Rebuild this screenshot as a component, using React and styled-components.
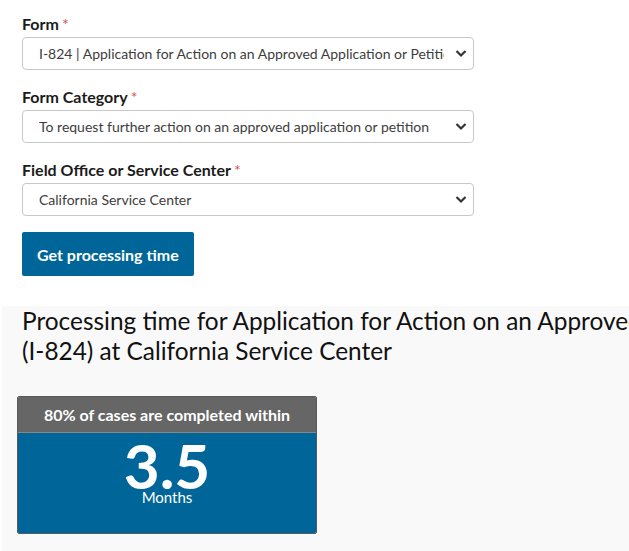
import React from 'react';
import styled, { createGlobalStyle } from 'styled-components';

const GlobalStyle = createGlobalStyle`
  html, body {
    margin: 0;
    padding: 0;
    background: #fff;
    overflow: hidden;
  }
  body {
    font-family: Lato, "Open Sans", Arial, sans-serif;
    color: #1b1b1b;
  }
`;

const Page = styled.div`
  width: 629px;
  height: 551px;
  overflow: hidden;
  display: flex;
  flex-direction: column;
`;

const FormArea = styled.form`
  padding: 15px 0 0 22px;
  display: flex;
  flex-direction: column;
`;

const Field = styled.div`
  display: flex;
  flex-direction: column;
  margin-bottom: 18px;
`;

const Label = styled.label`
  font-size: 16px;
  font-weight: 700;
  line-height: 18px;
  margin-bottom: 4px;
  color: #1b1b1b;

  span {
    color: #d9534f;
    font-weight: 400;
    margin-left: 3px;
  }
`;

const SelectWrap = styled.div`
  position: relative;
  width: 452px;
`;

const Select = styled.select`
  appearance: none;
  width: 100%;
  height: 33px;
  border: 1px solid #c8c8c8;
  border-radius: 4px;
  background: #fff;
  padding: 0 29px 0 16px;
  font-family: Lato, "Open Sans", Arial, sans-serif;
  font-size: 14px;
  color: #3d3d3d;
  outline: none;
`;

const Chevron = styled.svg`
  position: absolute;
  right: 7px;
  top: 12px;
  pointer-events: none;
`;

const Button = styled.button`
  align-self: flex-start;
  margin-top: -2px;
  height: 44px;
  padding: 0 15px;
  border: 0;
  border-radius: 2px;
  background: #006699;
  color: #fff;
  font-family: Lato, "Open Sans", Arial, sans-serif;
  font-size: 16px;
  font-weight: 700;
  cursor: pointer;
`;

const Results = styled.section`
  flex: 1;
  margin: 30px 0 0 2px;
  background: #f9f9f9;
  padding: 0 0 0 20px;
`;

const Heading = styled.h2`
  margin: 0;
  font-size: 24.4px;
  font-weight: 400;
  line-height: 30px;
  color: #111;
  white-space: nowrap;
`;

const Card = styled.div`
  width: 298px;
  margin: 30px 0 0 -5px;
  border: 1px solid #5a5a5a;
  border-radius: 2px;
  overflow: hidden;
`;

const CardHead = styled.div`
  height: 35px;
  background: #666666;
  color: #fff;
  font-size: 16px;
  font-weight: 700;
  display: flex;
  align-items: center;
  justify-content: center;
  border-bottom: 1px solid #888;
`;

const CardBody = styled.div`
  height: 100px;
  background: #006699;
  color: #fff;
  display: flex;
  flex-direction: column;
  align-items: center;
`;

const Big = styled.div`
  font-size: 62px;
  font-weight: 700;
  line-height: 50px;
  margin-top: 7px;
`;

const Unit = styled.div`
  font-size: 15px;
  line-height: 14px;
  margin-top: 0;
`;

const ChevronIcon = () => (
  <Chevron width="12" height="9" viewBox="0 0 12 9">
    <path d="M1.5 2l4.5 4.5L10.5 2" fill="none" stroke="#333" strokeWidth="2.2" />
  </Chevron>
);

const fields = [
  {
    label: 'Form',
    value: 'I-824 | Application for Action on an Approved Application or Petition',
  },
  {
    label: 'Form Category',
    value: 'To request further action on an approved application or petition',
  },
  {
    label: 'Field Office or Service Center',
    value: 'California Service Center',
  },
];

export default function App() {
  return (
    <Page>
      <GlobalStyle />
      <FormArea onSubmit={(e) => e.preventDefault()}>
        {fields.map((f) => (
          <Field key={f.label}>
            <Label>
              {f.label}
              <span>*</span>
            </Label>
            <SelectWrap>
              <Select defaultValue={f.value}>
                <option value={f.value}>{f.value}</option>
              </Select>
              <ChevronIcon />
            </SelectWrap>
          </Field>
        ))}
        <Button type="submit">Get processing time</Button>
      </FormArea>
      <Results>
        <Heading>
          Processing time for Application for Action on an Approved Application or Petition
          <br />
          (I-824) at California Service Center
        </Heading>
        <Card>
          <CardHead>80% of cases are completed within</CardHead>
          <CardBody>
            <Big>3.5</Big>
            <Unit>Months</Unit>
          </CardBody>
        </Card>
      </Results>
    </Page>
  );
}
